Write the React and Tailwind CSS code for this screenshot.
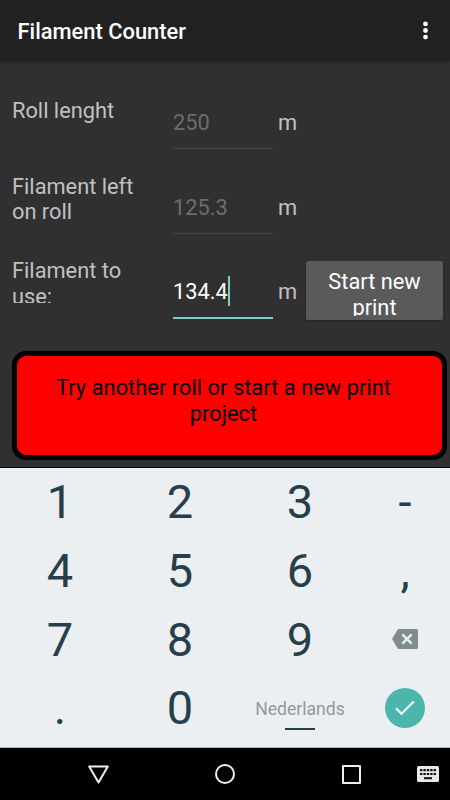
const font = "font-['Roboto','Noto_Sans',sans-serif]";

function Label({ children, className }) {
  return (
    <div className={`w-[161px] shrink-0 overflow-hidden whitespace-pre-line text-[21.8px] leading-[25.6px] text-[#c1c1c1] ${className}`}>
      {children}
    </div>
  );
}

function Field({ value, active }) {
  return (
    <div className="mt-[46px] flex w-[100px] shrink-0 flex-col">
      <div className={`flex h-[26px] items-center text-[21.8px] leading-[26px] ${active ? "text-white" : "text-[#6d6d6d]"}`}>
        {value}
        {active && <span className="h-[30px] w-[2.5px] shrink-0 -translate-y-px bg-[#80cbc4]" />}
      </div>
      <div className={active ? "mt-[12px] h-[2px] bg-[#80cbc4]" : "mt-[12px] h-px bg-[#454545]"} />
    </div>
  );
}

function Unit() {
  return <div className="mt-[46px] ml-[5px] w-7 shrink-0 text-[21.8px] leading-[26px] text-[#c1c1c1]">m</div>;
}

function Key({ children }) {
  return <button className="flex items-center justify-center pb-px text-[47px] leading-none text-[#263f4a]">{children}</button>;
}

export default function App() {
  return (
    <div className={`flex h-[800px] w-[450px] flex-col overflow-hidden bg-[#303030] ${font}`}>
      <header className="z-10 flex h-[61px] shrink-0 items-center justify-between bg-[#212121] pr-[22px] pl-[17.5px] shadow-[0_1px_3px_rgba(0,0,0,0.35)]">
        <h1 className="pt-[2px] text-[21.9px] leading-[26px] font-medium text-white">Filament Counter</h1>
        <svg width="5" height="19" viewBox="0 0 5 19" fill="white">
          <circle cx="2.5" cy="2.9" r="2.4" />
          <circle cx="2.5" cy="9.5" r="2.4" />
          <circle cx="2.5" cy="16.1" r="2.4" />
        </svg>
      </header>

      <main className="flex h-[406px] shrink-0 flex-col pt-[3px] pl-3">
        <div className="flex h-[84.5px] shrink-0 items-start">
          <Label className="mt-[34px]">Roll lenght</Label>
          <Field value="250" />
          <Unit />
        </div>
        <div className="flex h-[84.5px] shrink-0 items-start">
          <Label className="mt-[25px] h-[46px]">{"Filament left\non roll"}</Label>
          <Field value="125.3" />
          <Unit />
        </div>
        <div className="flex h-[84.5px] shrink-0 items-start">
          <Label className="mt-[25px] h-[45px]">{"Filament to\nuse:"}</Label>
          <Field value="134.4" active />
          <Unit />
          <button className="mt-[28px] flex h-[59px] w-[137px] shrink-0 items-start justify-center overflow-hidden rounded-[2px] bg-[#5a5a5b] pt-[8px] shadow-[0_1px_2px_rgba(0,0,0,0.3)]">
            <span className="block h-[47px] overflow-hidden text-[21.8px] leading-[25.6px] text-white">Start new<br />print</span>
          </button>
        </div>
        <div className="mt-[33.5px] mr-[3px] h-[109px] shrink-0 rounded-[14px] border-[5px] border-black bg-[red] pt-[18.5px] pr-3 text-center text-[21.9px] leading-[26px] text-black">
          Try another roll or start a new print<br />project
        </div>
      </main>

      <section className="grid h-[281px] shrink-0 grid-cols-[120px_120px_120px_90px] grid-rows-[68.7px_68.7px_68.7px_68.7px] border-t border-b border-t-black border-b-[#b0b4b6] bg-[#eceff1]">
        <Key>1</Key><Key>2</Key><Key>3</Key><Key>-</Key>
        <Key>4</Key><Key>5</Key><Key>6</Key><Key>,</Key>
        <Key>7</Key><Key>8</Key><Key>9</Key>
        <button className="flex items-center justify-center pb-px">
          <svg width="26" height="20" viewBox="0 0 26 20">
            <path d="M7 0H24.5Q26 0 26 1.5V18.5Q26 20 24.5 20H7Q6 20 5.4 19.1L0 10L5.4 .9Q6 0 7 0Z" fill="#7f8c90" />
            <path d="M10.3 5.3L19.7 14.7M19.7 5.3L10.3 14.7" stroke="#eceff1" strokeWidth="2.4" />
          </svg>
        </button>
        <Key>.</Key><Key>0</Key>
        <button className="flex flex-col items-center pt-[25px] text-[17.6px] leading-[21px] text-[#909a9e]">
          Nederlands
          <span className="mt-[8px] h-[1.5px] w-[30px] bg-[#263f4a]" />
        </button>
        <button className="flex items-center justify-center">
          <span className="flex size-[40px] items-center justify-center rounded-full bg-[#4db6ac]">
            <svg width="20" height="16" viewBox="0 0 20 16" fill="none" stroke="white" strokeWidth="2">
              <path d="M1 8.3L6.5 13.8L18.8 1.5" />
            </svg>
          </span>
        </button>
      </section>

      <nav className="flex h-[52px] shrink-0 items-center bg-black pl-[88px]">
        <svg width="21" height="19" viewBox="0 0 21 19" fill="none" stroke="#eee" strokeWidth="2" strokeLinejoin="round">
          <path d="M1.2 1.5H19.8L10.5 17.5Z" />
        </svg>
        <span className="ml-[106px] size-[20px] rounded-full border-2 border-[#eee]" />
        <span className="ml-[107px] size-[19px] rounded-[1px] border-2 border-[#eee]" />
        <svg className="ml-[56px]" width="22" height="16" viewBox="0 0 22 16">
          <rect width="22" height="16" rx="1.5" fill="#e8e8e8" />
          <path d="M3 4.2H19M3 8H19" stroke="#111" strokeWidth="2.2" strokeDasharray="2.4 1" />
          <path d="M7 12.2H15" stroke="#111" strokeWidth="2" />
        </svg>
      </nav>
    </div>
  );
}
